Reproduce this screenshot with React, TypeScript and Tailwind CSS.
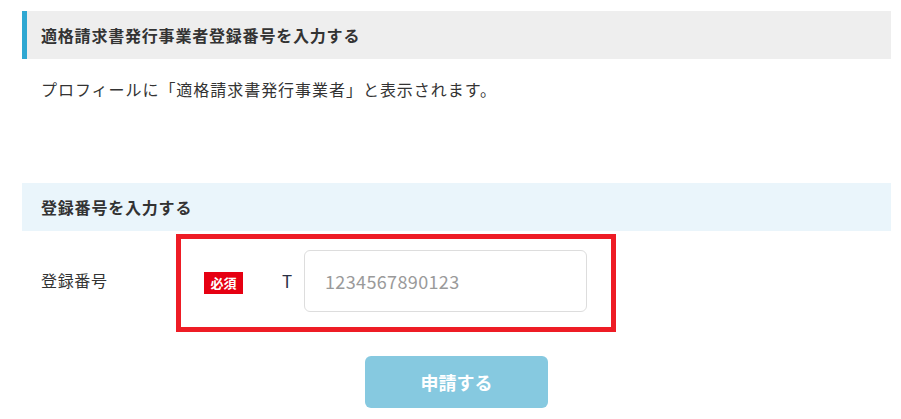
const font = { fontFamily: '"Noto Sans CJK JP", "Noto Sans", sans-serif' };

export default function App() {
  return (
    <div style={font} className="min-h-[419px] bg-white pt-[11px] pl-[22px] pr-[10px] text-[#333]">
      <div className="flex h-[48px] items-center border-l-[5px] border-[#2fa8d2] bg-[#eeeeee] pl-[14px]">
        <h2 className="text-[16px] font-bold tracking-[0.05em]">適格請求書発行事業者登録番号を入力する</h2>
      </div>
      <p className="pl-[19px] pt-[18px] text-[16px] leading-[24px] tracking-[0.06em]">
        プロフィールに「適格請求書発行事業者」と表示されます。
      </p>
      <div className="mt-[82px] flex h-[48px] items-center bg-[#eaf5fb] pl-[19px]">
        <h3 className="text-[16px] font-bold tracking-[0.05em]">登録番号を入力する</h3>
      </div>
      <div className="mt-[3px] flex items-center">
        <label className="w-[154px] pb-[6px] pl-[19px] text-[16px] tracking-[0.04em]">登録番号</label>
        <div className="flex h-[98px] w-[440px] items-center border-[5px] border-[#ee1c25] pb-[4px] pl-[23px]">
          <span className="mt-[4px] flex h-[22px] w-[39px] items-center justify-center bg-[#e60012] text-[13px] font-bold text-white">
            必須
          </span>
          <span className="ml-[39px] w-[9px] text-[17px] text-[#2a3045]">T</span>
          <input
            type="text"
            placeholder="1234567890123"
            className="ml-[13px] h-[62px] w-[283px] rounded-[6px] border border-[#dddddd] px-[20px] text-[18px] tracking-[0.02em] placeholder:text-[#9a9a9a] outline-none"
          />
        </div>
      </div>
      <div className="mt-[24px] flex justify-center">
        <button className="h-[52px] w-[183px] rounded-[6px] bg-[#86c9e0] text-[18px] font-bold text-white">
          申請する
        </button>
      </div>
    </div>
  );
}
